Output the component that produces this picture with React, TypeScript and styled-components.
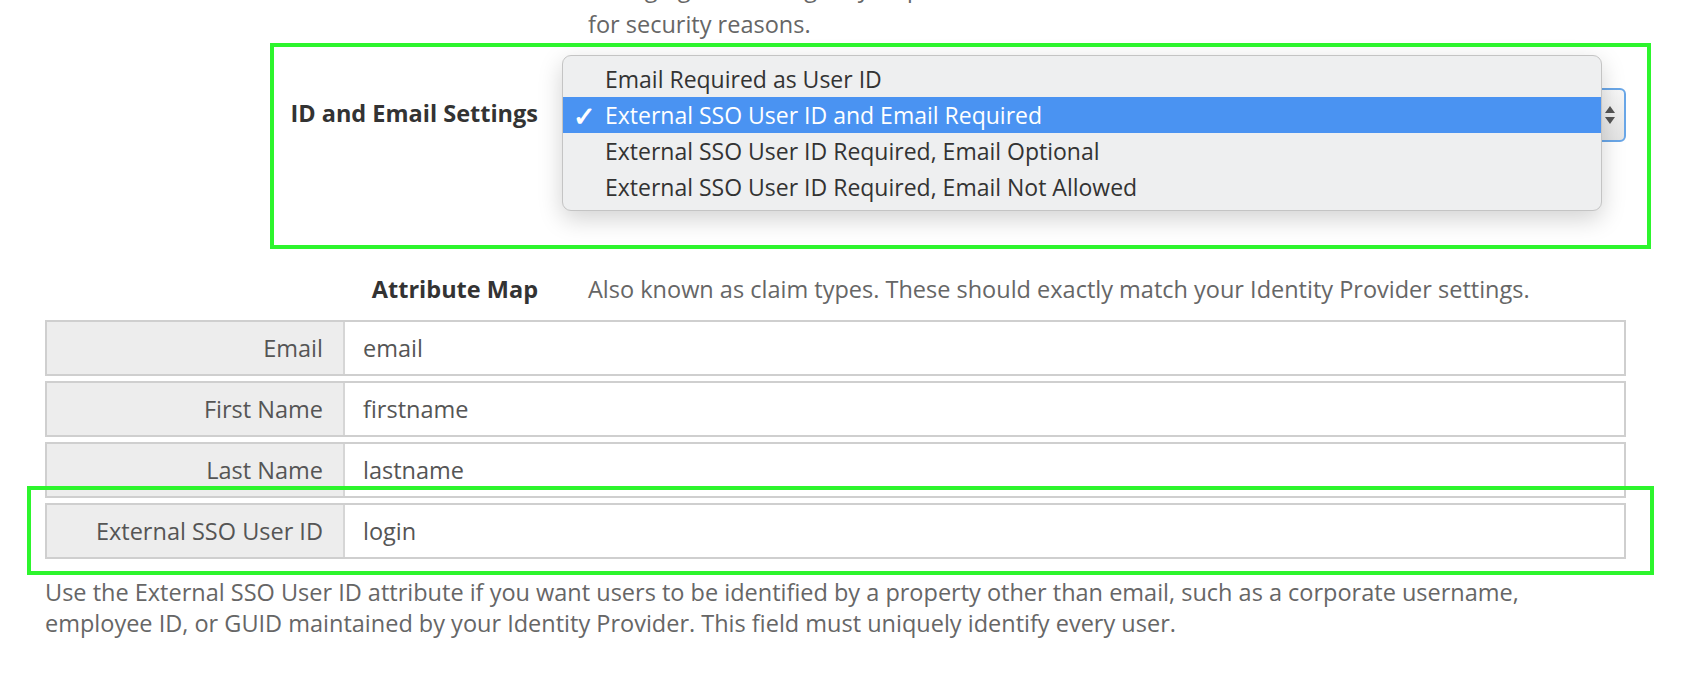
import React from "react";
import styled, { createGlobalStyle } from "styled-components";

const Global = createGlobalStyle`
  html, body { margin: 0; padding: 0; background: #fff; }
  body { font-family: "Open Sans", "Noto Sans", sans-serif; color: #555; }
`;

const Page = styled.div`
  position: relative;
  width: 1696px;
  height: 678px;
  overflow: hidden;
  padding: 0 70px 0 45px;
  box-sizing: border-box;
`;

const Intro = styled.div`
  margin-left: 543px;
  margin-top: -30px;
  font-size: 23.5px;
  line-height: 36px;
  color: #666;
  white-space: nowrap;
`;

const SettingRow = styled.div`
  display: flex;
  align-items: flex-start;
  margin-top: 3px;
  height: 170px;
`;

const Label = styled.div`
  width: 493px;
  text-align: right;
  font-weight: 700;
  font-size: 23.5px;
  line-height: 33px;
  color: #333;
  flex-shrink: 0;
`;

const SettingLabel = styled(Label)`
  padding-top: 52px;
`;

const SelectWrap = styled.div`
  position: relative;
  margin-left: 24px;
  flex: 1;
  margin-top: 43px;
`;

const SelectBox = styled.div`
  height: 54px;
  border: 2px solid #6aa7e8;
  border-radius: 6px;
  background: linear-gradient(#f7f7f7, #e4e4e4);
  box-sizing: border-box;
  display: flex;
  justify-content: flex-end;
  align-items: center;
  padding-right: 8px;
`;

const Menu = styled.div`
  position: absolute;
  left: 0;
  right: 24px;
  top: -33px;
  background: #eeeff0;
  border: 1px solid #c4c4c4;
  border-radius: 9px;
  box-shadow: 0 8px 24px rgba(0, 0, 0, 0.18);
  padding: 5px 0;
`;

const Option = styled.div<{ $sel?: boolean }>`
  height: 36px;
  display: flex;
  align-items: center;
  font-size: 23px;
  color: ${(p) => (p.$sel ? "#fff" : "#333")};
  background: ${(p) => (p.$sel ? "#4a93f2" : "transparent")};
  padding-left: 42px;
  position: relative;
`;

const Check = styled.span`
  position: absolute;
  left: 10px;
  font-size: 27px;
  font-weight: 700;
`;

const MapHeader = styled.div`
  display: flex;
  align-items: baseline;
  margin-top: 58px;
`;

const MapNote = styled.div`
  margin-left: 50px;
  font-size: 23.5px;
  color: #666;
  white-space: nowrap;
`;

const Table = styled.div`
  margin-top: 14px;
  display: flex;
  flex-direction: column;
  gap: 5px;
`;

const Row = styled.div`
  display: flex;
  height: 56px;
  border: 2px solid #cfcfcf;
  box-sizing: border-box;
`;

const Key = styled.div`
  width: 298px;
  background: #ededed;
  border-right: 2px solid #d6d6d6;
  display: flex;
  align-items: center;
  justify-content: flex-end;
  padding-right: 20px;
  box-sizing: border-box;
  font-size: 23.5px;
  color: #555;
`;

const Val = styled.div`
  flex: 1;
  display: flex;
  align-items: center;
  padding-left: 18px;
  font-size: 23.5px;
  color: #555;
`;

const Help = styled.p`
  margin: 18px 0 0;
  font-size: 23.5px;
  line-height: 31px;
  color: #666;
  white-space: nowrap;
`;

const Highlight = styled.div<{ $l: number; $t: number; $w: number; $h: number }>`
  position: absolute;
  left: ${(p) => p.$l}px;
  top: ${(p) => p.$t}px;
  width: ${(p) => p.$w}px;
  height: ${(p) => p.$h}px;
  border: 4px solid #2df52d;
  box-sizing: border-box;
  pointer-events: none;
`;

const rows = [
  ["Email", "email"],
  ["First Name", "firstname"],
  ["Last Name", "lastname"],
  ["External SSO User ID", "login"],
];

export default function App() {
  return (
    <Page>
      <Global />
      <Intro>
        Changing this setting may require users to re-enter their credentials,
        <br />
        for security reasons.
      </Intro>
      <SettingRow>
        <SettingLabel>ID and Email Settings</SettingLabel>
        <SelectWrap>
          <SelectBox>
            <svg width="12" height="24" viewBox="0 0 12 24">
              <path d="M6 3 L11 10 L1 10 Z M6 21 L11 14 L1 14 Z" fill="#555" />
            </svg>
          </SelectBox>
          <Menu>
            <Option>Email Required as User ID</Option>
            <Option $sel>
              <Check>✓</Check>External SSO User ID and Email Required
            </Option>
            <Option>External SSO User ID Required, Email Optional</Option>
            <Option>External SSO User ID Required, Email Not Allowed</Option>
          </Menu>
        </SelectWrap>
      </SettingRow>
      <MapHeader>
        <Label>Attribute Map</Label>
        <MapNote>Also known as claim types. These should exactly match your Identity Provider settings.</MapNote>
      </MapHeader>
      <Table>
        {rows.map(([k, v]) => (
          <Row key={k}>
            <Key>{k}</Key>
            <Val>{v}</Val>
          </Row>
        ))}
      </Table>
      <Help>
        Use the External SSO User ID attribute if you want users to be identified by a property other than email, such as a corporate username,
        <br />
        employee ID, or GUID maintained by your Identity Provider. This field must uniquely identify every user.
      </Help>
      <Highlight $l={270} $t={43} $w={1381} $h={206} />
      <Highlight $l={27} $t={486} $w={1627} $h={89} />
    </Page>
  );
}
